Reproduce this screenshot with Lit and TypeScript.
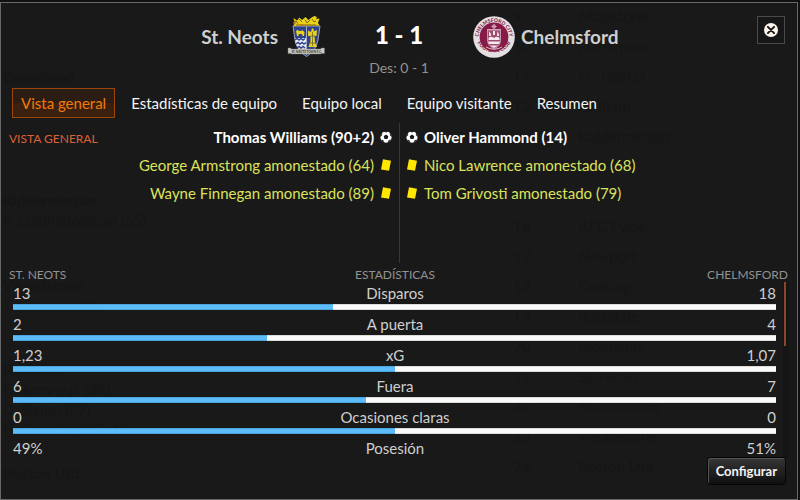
import { LitElement, html, css, svg } from "lit";
import { customElement, state } from "lit/decorators.js";
import { classMap } from "lit/directives/class-map.js";
import { styleMap } from "lit/directives/style-map.js";

type MatchEvent = { kind: "goal" | "card"; text: string };
type Stat = { home: string; name: string; away: string; share?: number };

const TABS = ["Vista general", "Estadísticas de equipo", "Equipo local", "Equipo visitante", "Resumen"];

const HOME_EVENTS: MatchEvent[] = [
  { kind: "goal", text: "Thomas Williams (90+2)" },
  { kind: "card", text: "George Armstrong amonestado (64)" },
  { kind: "card", text: "Wayne Finnegan amonestado (89)" },
];
const AWAY_EVENTS: MatchEvent[] = [
  { kind: "goal", text: "Oliver Hammond (14)" },
  { kind: "card", text: "Nico Lawrence amonestado (68)" },
  { kind: "card", text: "Tom Grivosti amonestado (79)" },
];

const STATS: Stat[] = [
  { home: "13", name: "Disparos", away: "18", share: 41.9 },
  { home: "2", name: "A puerta", away: "4", share: 33.3 },
  { home: "1,23", name: "xG", away: "1,07", share: 50 },
  { home: "6", name: "Fuera", away: "7", share: 46.2 },
  { home: "0", name: "Ocasiones claras", away: "0", share: 50 },
  { home: "49%", name: "Posesión", away: "51%" },
];

// League table that shows faintly through the panel.
const LEAGUE: [string, string][] = [
  ["9", "Maidstone"], ["10", "Hartlepool"], ["11", "FC Halifax"], ["12", "Oldham"],
  ["", "Kidderminster"], ["", ""], ["", ""], ["16", "AFC Fylde"],
  ["17", "Newport"], ["18", "Dorking"], ["19", "Rochdale"], ["20", "Aldershot"],
  ["21", "St. Neots"], ["22", "Maidenhead"], ["23", "Wealdstone"], ["24", "Boston Utd"],
];

const ballIcon = html`<svg class="icon" viewBox="0 0 12 12" aria-hidden="true">
  <circle cx="6" cy="6" r="5.7" fill="#fff" />
  <path d="M6 3.600 8.300 5.200 7.500 8H4.500L3.700 5.200Z" fill="#191919" />
  <path d="M4 .1 6 1.300 8 .1ZM.2 5.600 1.700 4.400 1.700 2ZM11.800 5.600 10.300 4.400 10.300 2ZM1.500 9.100 3.100 9.300 3.900 11.500ZM10.500 9.100 8.900 9.300 8.100 11.500Z" fill="#191919" stroke="#191919" stroke-width=".5" />
</svg>`;

const cardIcon = html`<svg class="icon" viewBox="0 0 12 12" aria-hidden="true">
  <path d="M3 .3 11 1.700 9 11.800 1 10.400Z" fill="#ffe600" />
</svg>`;

const neotsCrest = html`<svg class="crest home-crest" viewBox="0 0 38 42" role="img" aria-label="Escudo de St. Neots">
  <path d="M6 10H33L31 24Q29 35 19.500 40.500Q10 35 8 24L6 10Z" fill="#2e438c" stroke="#a9b0c0" stroke-width=".9" />
  <path d="M19.500 10.500V39" stroke="#c5c8d0" stroke-width=".8" />
  <path d="M7.500 6 6.500 2 10 4.500 12.500 1.500 15 4 18.500 1 21.500 4 25 1.200 27.500 0 30 1 29 3 32.500 2.500 31 7 32.500 9.500 6.500 10Z" fill="#e9d318" />
  <path d="M6 6.500 9 5 11 7.500M12 3 15 6M18 3.500 20 7 23 4M25 3 27 6 29 5M9 9H29" fill="none" stroke="#82650e" stroke-width="1" />
  <path d="M6 7 9 6 8 9ZM13 8H17L15 9.500Z" fill="#d36a28" />
  <path d="M9 15 10.500 13.800 12 15 16 14.500 17.500 16.500 17 20H15.500L15 18H12L11.500 20H10Z" fill="#e8d020" />
  <path d="M25 12 27 13.500 26.500 15.500 30 14 29.500 20 27.500 20 28 26 30 31H21.500L23.500 25 23.500 20 21 20 21 14.500 24 16Z" fill="#e8d020" />
  <path d="M25.500 16V30M23.500 20H28M23 27H29" stroke="#6d6425" stroke-width=".8" />
  <path d="M8 22H19V33H11.500L8.500 27Z" fill="#e7eaf2" />
  <path d="M8 24 10 22.500 12 24 14 22.500 16 24 18 22.500M9 28 11 26.500 13 28 15 26.500 17 28 19 26.500M10 32 12 30.500 14 32 16 30.500 18 32" fill="none" stroke="#2e438c" stroke-width="1.500" />
  <path d="M1 32H4V33H34V32H37.500V37.500H34V38H4V37.500H1Z" fill="#c8c8c2" stroke="#77776f" stroke-width=".4" />
  <text x="19.500" y="36.800" text-anchor="middle" class="ribbon">ST. NEOTS TOWN F.C.</text>
</svg>`;

const chelmsfordCrest = html`<svg class="crest away-crest" viewBox="0 0 42 42" role="img" aria-label="Escudo de Chelmsford">
  <defs>
    <path id="ring-top" d="M5.800 23A15.300 15.300 0 1 1 36.200 23" />
    <path id="ring-bottom" d="M1.800 19A19.300 19.300 0 0 0 40.200 19" />
  </defs>
  <circle cx="21" cy="21" r="20.800" fill="#e4dfe1" />
  <circle cx="21" cy="21" r="14.400" fill="#861b48" />
  <text class="ring"><textPath href="#ring-top" startOffset="50%" text-anchor="middle">CHELMSFORD CITY</textPath></text>
  <text class="ring"><textPath href="#ring-bottom" startOffset="50%" text-anchor="middle">FOOTBALL CLUB</textPath></text>
  <circle cx="21" cy="10.500" r="1.700" fill="none" stroke="#d9b8c5" stroke-width=".8" />
  <path d="M21 8V13M18.500 10.500H23.500M14 13.500H28" stroke="#d9b8c5" stroke-width=".8" />
  <path d="M14.500 14H27.500V24Q27.500 30 21 33Q14.500 30 14.500 24Z" fill="#a04a70" stroke="#dfc3ce" stroke-width=".7" />
  <path d="M16 15 18 18V20H16ZM24.500 15 26 18V20H24ZM20 15H22V19H20Z" fill="#f1e2e8" />
  <path d="M15.500 22Q18 19.500 21 22 24 19.500 26.500 22V24H15.500Z" fill="#f5e9ed" />
  <path d="M15 25.500H27L26 28H16ZM17 29.500H25L21 32Z" fill="#f5e9ed" />
  <path d="M13 31Q21 35.500 29 31" fill="none" stroke="#d9b8c5" stroke-width="1" />
</svg>`;

const closeIcon = svg`<circle cx="7" cy="7" r="7" fill="#fdf5e9" />
  <path d="M3.900 3.900 10.100 10.100M10.100 3.900 3.900 10.100" stroke="#171717" stroke-width="2" stroke-linecap="round" />`;

@customElement("app-root")
export class AppRoot extends LitElement {
  static styles = css`
    :host {
      display: block;
      box-sizing: border-box;
      min-height: 100vh;
      padding: 2px 2px 0 0;
      background: #111113;
      color: #cfcfcf;
      font: 15px/20px Lato, "Open Sans", sans-serif;
    }
    * { box-sizing: border-box; }
    button { font: inherit; cursor: pointer; }
    .panel {
      position: relative;
      display: flex;
      flex-direction: column;
      min-height: calc(100vh - 3px);
      border: 1px solid #686868;
      background: #191919;
      overflow: hidden;
    }
    .ghost {
      position: absolute;
      inset: 0;
      color: #161616;
      pointer-events: none;
    }
    .league {
      position: absolute;
      left: 508px;
      top: -2px;
      border-spacing: 0;
      line-height: 30px;
    }
    .league td { height: 30px; padding: 0 0 0 4px; }
    .league td + td { padding-left: 48px; }
    .results {
      position: absolute;
      left: 2px;
      top: 0;
      display: grid;
      grid-template-rows: 84px 123px 20px 65px 20px 64px 20px 20px 20px 44px;
      align-items: end;
    }
    .header {
      position: relative;
      display: grid;
      grid-template-columns: 1fr 148px 1fr;
      height: 85px;
      padding-top: 13px;
    }
    .team {
      display: flex;
      align-items: center;
      gap: 6px;
      height: 42px;
      font-size: 19px;
      font-weight: 700;
    }
    .team h2 { margin: 0; font: inherit; }
    .home { justify-content: flex-end; gap: 9px; }
    .crest { display: block; height: 42px; }
    .home-crest { width: 38px; }
    .away-crest { width: 42px; }
    .ribbon { font: 700 3px Lato, sans-serif; fill: #33332f; }
    .ring { font: 900 5px Lato, sans-serif; fill: #861b48; }
    .score { text-align: center; }
    .score strong {
      display: block;
      color: #fff;
      font-size: 24px;
      font-weight: 900;
      line-height: 38px;
    }
    .score span { display: block; color: #929292; font-size: 14px; line-height: 28px; }
    .close {
      display: grid;
      place-items: center;
      align-self: flex-start;
      width: 28px;
      height: 28px;
      margin: 0 12px 0 auto;
      padding: 0;
      border: 1px solid #4a4a4a;
      background: #171717;
    }
    .close svg { width: 14px; height: 14px; }
    .tabs { position: relative; display: flex; gap: 7px; padding-left: 11px; }
    .tab {
      height: 30px;
      padding: 0 8px;
      border: 1px solid transparent;
      background: none;
      color: #f4f4f4;
      white-space: nowrap;
    }
    .active {
      border-color: #99470c;
      background: linear-gradient(#2b1d14 50%, #3b2010 50%);
      color: #f27a08;
    }
    .events {
      position: relative;
      display: grid;
      grid-template-columns: 1fr 1fr;
      min-height: 140px;
      margin-top: 5px;
    }
    .caption {
      position: absolute;
      left: 8px;
      top: 6px;
      margin: 0;
      color: #dc6238;
      font-size: 12px;
      font-weight: 400;
    }
    .list { margin: 0; padding: 0 6px; list-style: none; }
    .list + .list { border-left: 1px solid #383838; }
    .list:first-of-type { padding-right: 7px; }
    .event {
      display: flex;
      align-items: center;
      gap: 6px;
      height: 28px;
      color: #dce25c;
      white-space: nowrap;
    }
    .list:first-of-type .event { flex-direction: row-reverse; }
    .event.goal { color: #fff; font-weight: 700; }
    .icon { width: 12px; height: 12px; }
    .stats-area { position: relative; margin-top: 4px; }
    .stats { width: 100%; table-layout: fixed; border-collapse: collapse; }
    .stats th, .stats td { padding: 0 8px 0 0; text-align: center; font-weight: 400; }
    .stats thead th { height: 15px; color: #929292; font-size: 12px; line-height: 15px; }
    .stats tbody th, .stats tbody td { height: 22px; line-height: 22px; }
    .stats thead th:first-child { padding-left: 8px; text-align: left; }
    .stats thead th:last-child { padding-right: 9px; text-align: right; }
    .stats tbody td:first-child { padding-left: 12px; text-align: left; }
    .stats tbody td:last-child { padding-right: 21px; text-align: right; }
    .stats tbody .bar-cell { height: 9px; line-height: 0; vertical-align: top; }
    .bar { height: 6px; border: 1px solid #dcdcdc; border-width: 1px 0; background: #fafafa; }
    .fill { height: 6px; margin-top: -1px; border: 1px solid #4ba4dc; border-width: 1px 0; background: #5cbcfa; }
    .track {
      position: absolute;
      right: 8px;
      top: 15px;
      bottom: 0;
      width: 6px;
      padding-left: 1px;
      background: #151515;
    }
    .thumb { width: 2px; height: 64px; background: #8c452a; }
    .footer { position: relative; display: flex; justify-content: flex-end; margin-top: -2px; padding: 0 11px 14px; }
    .configure {
      height: 28px;
      padding: 0 8px;
      border: 1px solid #050505;
      border-radius: 3px;
      background: linear-gradient(#363636, #222 50%, #101010);
      box-shadow: inset 1px 1px 0 #555;
      color: #f4f4f4;
      font-size: 13px;
      font-weight: 700;
    }
  `;

  @state() private tab = 0;

  private events(items: MatchEvent[]) {
    return html`<ul class="list">
      ${items.map(
        (e) => html`<li class=${classMap({ event: true, goal: e.kind === "goal" })}>
          ${e.kind === "goal" ? ballIcon : cardIcon}<span>${e.text}</span>
        </li>`
      )}
    </ul>`;
  }

  private statRow(s: Stat) {
    return html`<tr><td>${s.home}</td><th scope="row">${s.name}</th><td>${s.away}</td></tr>
      ${s.share === undefined
        ? ""
        : html`<tr><td class="bar-cell" colspan="3">
            <div class="bar"><div class="fill" style=${styleMap({ width: `${s.share}%` })}></div></div>
          </td></tr>`}`;
  }

  render() {
    return html`<main class="panel">
      <div class="ghost" aria-hidden="true">
        <div class="results">
          <b>Gateshead</b><b>Kidderminster</b><span>P. Ehibhatiomhan (55)</span>
          <b>Wealdstone</b><span>T. Simpson (81)</span>
          <b>Rochdale</b><span>F. Berry p.p. (36)</span><span>C. Shann (89)</span>
          <span>H. Shearing (90+1)</span><b>Boston Utd</b>
        </div>
        <table class="league">
          ${LEAGUE.map(([pos, name]) => html`<tr><td>${pos}</td><td>${name}</td></tr>`)}
        </table>
      </div>
      <header class="header">
        <div class="team home"><h2>St. Neots</h2>${neotsCrest}</div>
        <div class="score"><strong>1 - 1</strong><span>Des: 0 - 1</span></div>
        <div class="team">
          ${chelmsfordCrest}<h2>Chelmsford</h2>
          <button class="close" aria-label="Cerrar"><svg viewBox="0 0 14 14" aria-hidden="true">${closeIcon}</svg></button>
        </div>
      </header>
      <nav class="tabs">
        ${TABS.map(
          (t, i) => html`<button class=${classMap({ tab: true, active: i === this.tab })} @click=${() => (this.tab = i)}>${t}</button>`
        )}
      </nav>
      <section class="events">
        <h3 class="caption">VISTA GENERAL</h3>
        ${this.events(HOME_EVENTS)}${this.events(AWAY_EVENTS)}
      </section>
      <section class="stats-area">
        <table class="stats">
          <thead><tr><th scope="col">ST. NEOTS</th><th scope="col">ESTADÍSTICAS</th><th scope="col">CHELMSFORD</th></tr></thead>
          <tbody>${STATS.map((s) => this.statRow(s))}</tbody>
        </table>
        <div class="track"><div class="thumb"></div></div>
      </section>
      <footer class="footer"><button class="configure">Configurar</button></footer>
    </main>`;
  }
}
